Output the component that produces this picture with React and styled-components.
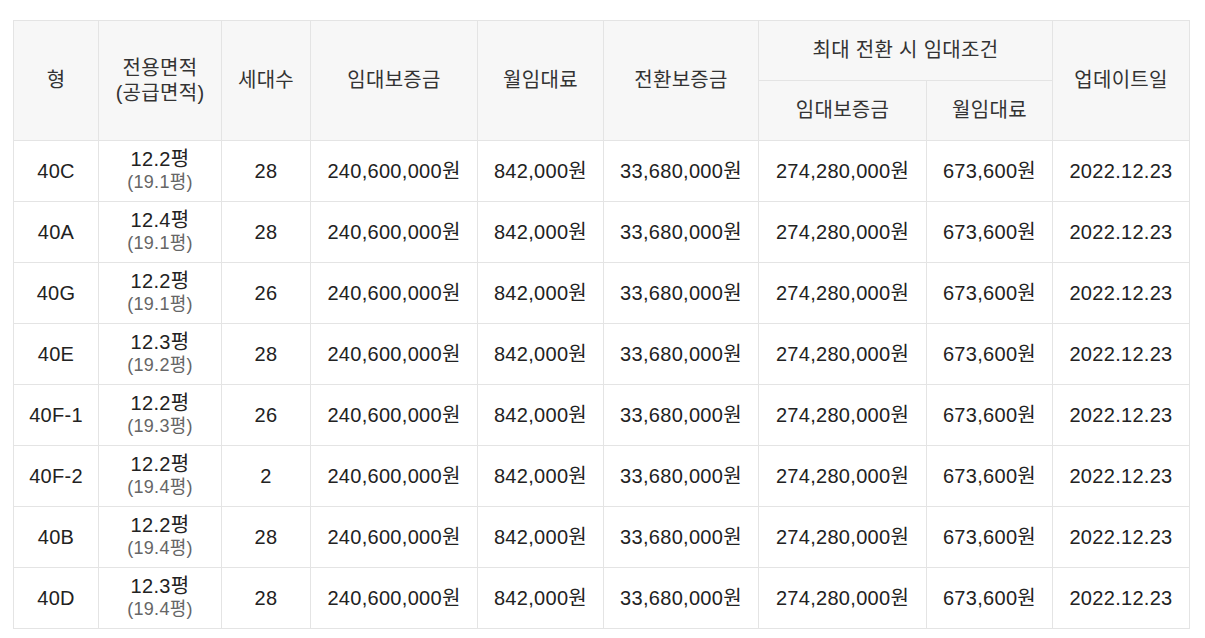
import React from "react";
import styled, { createGlobalStyle } from "styled-components";

const GlobalStyle = createGlobalStyle`
  body {
    margin: 0;
    background: #ffffff;
    font-family: "Liberation Sans", Arial, "Noto Sans CJK KR", sans-serif;
  }
`;

const Wrap = styled.div`
  padding: 20px 0 0 13px;
`;

const Table = styled.table`
  width: 1176px;
  border-collapse: collapse;
  table-layout: fixed;
  color: #222222;
  font-size: 20px;
  letter-spacing: 0.3px;
`;

const Th = styled.th`
  height: 59px;
  padding: 0;
  background: #f7f7f7;
  border: 1px solid #e4e4e4;
  font-weight: normal;
  color: #333333;
  line-height: 25px;
  text-align: center;
  vertical-align: middle;
`;

const Td = styled.td`
  height: 60px;
  padding: 0;
  border: 1px solid #e4e4e4;
  text-align: center;
  vertical-align: middle;
  line-height: 23px;
`;

const Sub = styled.div`
  font-size: 18px;
  color: #666666;
`;

const widths = [85, 123, 89, 167, 126, 155, 168, 126, 137];

const rows = [
  ["40C", "12.2", "19.1", "28"],
  ["40A", "12.4", "19.1", "28"],
  ["40G", "12.2", "19.1", "26"],
  ["40E", "12.3", "19.2", "28"],
  ["40F-1", "12.2", "19.3", "26"],
  ["40F-2", "12.2", "19.4", "2"],
  ["40B", "12.2", "19.4", "28"],
  ["40D", "12.3", "19.4", "28"],
];

export default function App() {
  return (
    <>
      <GlobalStyle />
      <Wrap>
        <Table>
          <colgroup>
            {widths.map((w, i) => (
              <col key={i} style={{ width: w }} />
            ))}
          </colgroup>
          <thead>
            <tr>
              <Th rowSpan={2}>형</Th>
              <Th rowSpan={2}>
                전용면적
                <br />
                (공급면적)
              </Th>
              <Th rowSpan={2}>세대수</Th>
              <Th rowSpan={2}>임대보증금</Th>
              <Th rowSpan={2}>월임대료</Th>
              <Th rowSpan={2}>전환보증금</Th>
              <Th colSpan={2}>최대 전환 시 임대조건</Th>
              <Th rowSpan={2}>업데이트일</Th>
            </tr>
            <tr>
              <Th>임대보증금</Th>
              <Th>월임대료</Th>
            </tr>
          </thead>
          <tbody>
            {rows.map((r) => (
              <tr key={r[0]}>
                <Td>{r[0]}</Td>
                <Td>
                  {r[1]}평
                  <Sub>({r[2]}평)</Sub>
                </Td>
                <Td>{r[3]}</Td>
                <Td>240,600,000원</Td>
                <Td>842,000원</Td>
                <Td>33,680,000원</Td>
                <Td>274,280,000원</Td>
                <Td>673,600원</Td>
                <Td>2022.12.23</Td>
              </tr>
            ))}
          </tbody>
        </Table>
      </Wrap>
    </>
  );
}
